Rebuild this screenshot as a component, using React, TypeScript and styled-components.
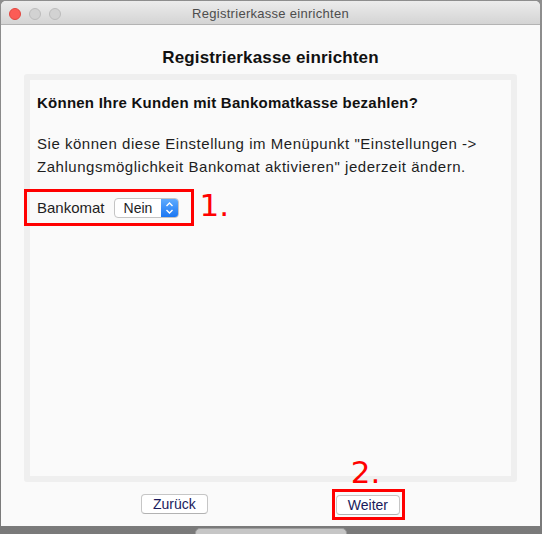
import styled, { createGlobalStyle } from 'styled-components';

const GlobalStyle = createGlobalStyle`
  html, body {
    margin: 0;
    padding: 0;
  }
  body {
    background: #858585;
    font-family: 'Liberation Sans', Arial, sans-serif;
  }
  * {
    box-sizing: border-box;
  }
`;

const Select = ({ value }: { value: string }) => (
  <S.SelectBox>
    <S.SelectValue>{value}</S.SelectValue>
    <S.SelectArrows>
      <svg width="9" height="14" viewBox="0 0 9 14" fill="none">
        <path d="M1.5 5 L4.5 2 L7.5 5" stroke="#fff" strokeWidth="1.4" />
        <path d="M1.5 9 L4.5 12 L7.5 9" stroke="#fff" strokeWidth="1.4" />
      </svg>
    </S.SelectArrows>
  </S.SelectBox>
);

const App = () => {
  return (
    <>
      <GlobalStyle />
      <S.Desktop>
        <S.Window>
          <S.TitleBar>
            <S.Lights>
              <S.Light $active />
              <S.Light />
              <S.Light />
            </S.Lights>
            <S.WindowTitle>Registrierkasse einrichten</S.WindowTitle>
          </S.TitleBar>
          <S.Content>
            <S.Heading>Registrierkasse einrichten</S.Heading>
            <S.Panel>
              <S.Question>Können Ihre Kunden mit Bankomatkasse bezahlen?</S.Question>
              <S.Text>
                Sie können diese Einstellung im Menüpunkt "Einstellungen -&gt;
                <br />
                Zahlungsmöglichkeit Bankomat aktivieren" jederzeit ändern.
              </S.Text>
              <S.FieldRow>
                <S.Highlight>
                  <S.Label>Bankomat</S.Label>
                  <Select value="Nein" />
                </S.Highlight>
                <S.StepNumber>1.</S.StepNumber>
              </S.FieldRow>
            </S.Panel>
            <S.Footer>
              <S.Button>Zurück</S.Button>
              <S.Highlight $tight>
                <S.Button>Weiter</S.Button>
                <S.StepBadge>2.</S.StepBadge>
              </S.Highlight>
            </S.Footer>
          </S.Content>
        </S.Window>
        <S.BackWindow />
      </S.Desktop>
    </>
  );
};

interface StyleProps {
  $active?: boolean;
  $tight?: boolean;
}

const S = {
  Desktop: styled.div`
    width: 542px;
    height: 534px;
    overflow: hidden;
    padding: 1px 2px 0 1px;
    background: linear-gradient(#8e8e8e, #7a7a7a);
  `,
  Window: styled.div`
    width: 539px;
    height: 525px;
    display: flex;
    flex-direction: column;
    background: #fafafa;
    border-radius: 5px 5px 0 0;
    overflow: hidden;
  `,
  TitleBar: styled.div`
    height: 24px;
    padding-top: 3px;
    display: grid;
    grid-template-columns: 1fr auto 1fr;
    align-items: center;
    background: linear-gradient(#ececec, #d4d4d4);
    border-bottom: 1px solid #b3b3b3;
  `,
  Lights: styled.div`
    display: flex;
    gap: 8px;
    padding-left: 8px;
  `,
  Light: styled.span<StyleProps>`
    width: 12px;
    height: 12px;
    border-radius: 50%;
    background: ${({ $active }) => ($active ? '#fc5c56' : '#d2d2d2')};
    border: 1px solid ${({ $active }) => ($active ? '#e2463f' : '#bcbcbc')};
  `,
  WindowTitle: styled.div`
    font-size: 13px;
    letter-spacing: 0.28px;
    line-height: 20px;
    color: #4d4d4d;
  `,
  Content: styled.div`
    flex: 1;
    display: flex;
    flex-direction: column;
    padding-top: 24px;
  `,
  Heading: styled.div`
    font-size: 17px;
    font-weight: bold;
    letter-spacing: 0.15px;
    line-height: 18px;
    text-align: center;
    color: #111;
    margin-bottom: 7px;
  `,
  Panel: styled.div`
    margin: 0 23px;
    width: 493px;
    height: 408px;
    border: 6px solid #efefef;
    border-radius: 3px;
    padding: 14px 7px;
    background: #fafafa;
    display: flex;
    flex-direction: column;
  `,
  Question: styled.div`
    font-size: 15px;
    font-weight: bold;
    letter-spacing: 0.24px;
    line-height: 17px;
    color: #111;
  `,
  Text: styled.div`
    margin-top: 21px;
    font-size: 15px;
    letter-spacing: 0.53px;
    line-height: 23px;
    color: #1e1e1e;
  `,
  FieldRow: styled.div`
    margin-top: 11px;
    margin-left: -13px;
    display: flex;
    align-items: flex-start;
  `,
  Highlight: styled.div<StyleProps>`
    position: relative;
    display: flex;
    align-items: center;
    gap: 9px;
    border: 3px solid #ff0000;
    height: ${({ $tight }) => ($tight ? '31px' : '37px')};
    padding: ${({ $tight }) => ($tight ? '1px 2px 0 1px' : '0 12px 0 10px')};
  `,
  Label: styled.span`
    font-size: 15px;
    color: #1e1e1e;
  `,
  SelectBox: styled.div`
    display: flex;
    width: 65px;
    height: 20px;
    border: 1px solid #c4c4c4;
    border-radius: 4px;
    background: #fff;
    overflow: hidden;
  `,
  SelectValue: styled.span`
    flex: 1;
    padding-left: 9px;
    font-size: 14px;
    line-height: 18px;
    color: #1e1e1e;
  `,
  SelectArrows: styled.span`
    width: 17px;
    display: flex;
    align-items: center;
    justify-content: center;
    background: linear-gradient(#5eabfe, #1b77f3);
  `,
  StepNumber: styled.span`
    margin: 1px 0 0 6px;
    font-family: 'DejaVu Sans', sans-serif;
    font-size: 31px;
    line-height: 31px;
    color: #ff0000;
  `,
  StepBadge: styled.span`
    position: absolute;
    top: -35px;
    left: 16px;
    font-family: 'DejaVu Sans', sans-serif;
    font-size: 31px;
    line-height: 31px;
    color: #ff0000;
  `,
  Footer: styled.div`
    flex: 1;
    display: flex;
    align-items: center;
    justify-content: center;
    gap: 124px;
    padding-left: 5px;
  `,
  Button: styled.button`
    height: 20px;
    padding: 0 11px;
    border: 1px solid #c6c6c6;
    border-bottom-color: #b2b2b2;
    border-radius: 4px;
    background: #fff;
    font-family: 'Liberation Sans', Arial, sans-serif;
    font-size: 14px;
    line-height: 18px;
    color: #1a1a5c;
  `,
  BackWindow: styled.div`
    margin: 2px 0 0 194px;
    width: 152px;
    height: 10px;
    background: #c6c6c6;
    border: 1px solid #9c9c9c;
    border-radius: 5px 5px 0 0;
  `,
};

export default App;
